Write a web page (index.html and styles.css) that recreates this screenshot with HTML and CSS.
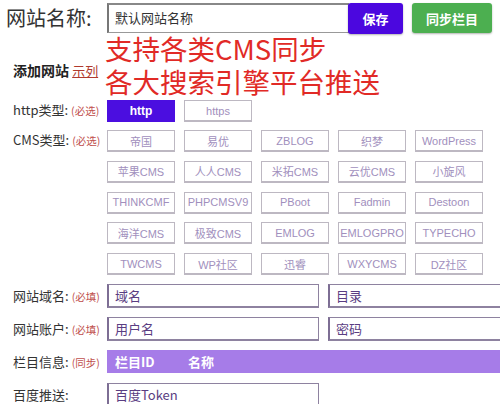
FILE: index.html
```html
<!DOCTYPE html>
<html lang="zh">
<head>
<meta charset="utf-8">
<link rel="stylesheet" href="styles.css">
</head>
<body>
<div class="page">
  <div class="top">
    <div class="site-label">网站名称:</div>
    <div class="site-input">默认网站名称</div>
    <div class="btn-save">保存</div>
    <div class="btn-sync">同步栏目</div>
  </div>
  <div class="promo-row">
    <div class="add-title"><b>添加网站</b> <span class="example">示列</span></div>
    <div class="promo">
      <div class="promo-line">支持各类CMS同步</div>
      <div class="promo-line">各大搜索引擎平台推送</div>
    </div>
  </div>
  <div class="row http-row">
    <div class="label">http类型:<span class="req">(必选)</span></div>
    <div class="opts">
      <div class="opt active">http</div>
      <div class="opt">https</div>
    </div>
  </div>
  <div class="row cms-row">
    <div class="label">CMS类型:<span class="req">(必选)</span></div>
    <div class="grid">
      <div class="opt">帝国</div><div class="opt">易优</div><div class="opt">ZBLOG</div><div class="opt">织梦</div><div class="opt">WordPress</div>
      <div class="opt">苹果CMS</div><div class="opt">人人CMS</div><div class="opt">米拓CMS</div><div class="opt">云优CMS</div><div class="opt">小旋风</div>
      <div class="opt">THINKCMF</div><div class="opt">PHPCMSV9</div><div class="opt">PBoot</div><div class="opt">Fadmin</div><div class="opt">Destoon</div>
      <div class="opt">海洋CMS</div><div class="opt">极致CMS</div><div class="opt">EMLOG</div><div class="opt">EMLOGPRO</div><div class="opt">TYPECHO</div>
      <div class="opt">TWCMS</div><div class="opt">WP社区</div><div class="opt">迅睿</div><div class="opt">WXYCMS</div><div class="opt">DZ社区</div>
    </div>
  </div>
  <div class="row field-row first-field">
    <div class="label">网站域名:<span class="req">(必填)</span></div>
    <div class="fields">
      <div class="field">域名</div>
      <div class="field open">目录</div>
    </div>
  </div>
  <div class="row field-row">
    <div class="label">网站账户:<span class="req">(必填)</span></div>
    <div class="fields">
      <div class="field">用户名</div>
      <div class="field open">密码</div>
    </div>
  </div>
  <div class="row field-row">
    <div class="label">栏目信息:<span class="req">(同步)</span></div>
    <div class="bar"><span class="bar-id">栏目ID</span><span>名称</span></div>
  </div>
  <div class="row field-row">
    <div class="label">百度推送:</div>
    <div class="fields">
      <div class="field">百度Token</div>
    </div>
  </div>
</div>
</body>
</html>
```
FILE: styles.css
```css
html, body {
  margin: 0;
  padding: 0;
  overflow: hidden;
  background: #ffffff;
}
body {
  width: 500px;
  height: 404px;
  font-family: "Liberation Sans", "Noto Sans CJK SC", sans-serif;
  color: #333333;
}
.page {
  display: flex;
  flex-direction: column;
}
.top {
  display: flex;
  align-items: center;
  height: 35px;
  padding-top: 1px;
  box-sizing: border-box;
}
.site-label {
  width: 107px;
  padding-left: 6px;
  box-sizing: border-box;
  font-size: 20px;
  font-family: "Noto Sans CJK SC", sans-serif;
  color: #333;
  margin-top: -2px;
}
.site-input {
  width: 242px;
  height: 30px;
  box-sizing: border-box;
  border: 1px solid #999;
  border-left: 2px solid #777;
  border-top: 2px solid #888;
  font-family: "Noto Sans CJK SC", sans-serif;
  font-size: 13px;
  line-height: 26px;
  padding-left: 6px;
  color: #333;
}
.btn-save {
  width: 55px;
  height: 31px;
  margin-left: -1px;
  background: #4b07df;
  border-radius: 3px;
  color: #fff;
  font-family: "Noto Sans CJK SC", sans-serif;
  font-size: 13px;
  font-weight: bold;
  display: flex;
  align-items: center;
  justify-content: center;
  box-shadow: 0 1px 2px rgba(0,0,0,0.3);
}
.btn-sync {
  width: 80px;
  height: 30px;
  margin-left: 9px;
  background: #4caf50;
  border-radius: 3px;
  color: #fff;
  font-family: "Noto Sans CJK SC", sans-serif;
  font-size: 13px;
  font-weight: bold;
  display: flex;
  align-items: center;
  justify-content: center;
  box-shadow: 0 1px 2px rgba(0,0,0,0.3);
}
.promo-row {
  display: flex;
  height: 64px;
}
.add-title {
  width: 105px;
  padding-left: 13px;
  box-sizing: border-box;
  padding-top: 25px;
  font-family: "Noto Sans CJK SC", sans-serif;
  font-size: 14px;
  color: #222;
}
.example {
  color: #b03a2e;
  font-size: 13px;
  text-decoration: underline;
}
.promo {
  color: #e12a26;
  font-family: "Noto Sans CJK SC", sans-serif;
  font-size: 27.5px;
  margin-top: -3px;
}
.promo-line {
  height: 33px;
  line-height: 33px;
  white-space: nowrap;
}
.row {
  display: flex;
}
.label {
  width: 107px;
  padding-left: 13px;
  box-sizing: border-box;
  font-size: 13px;
  font-family: "Noto Sans CJK SC", sans-serif;
  color: #333;
  white-space: nowrap;
}
.req {
  color: #c0504d;
  font-size: 10.5px;
  margin-left: 3px;
}
.http-row {
  height: 30px;
  margin-top: 1px;
}
.http-row .label, .cms-row .label {
  line-height: 22px;
  margin-top: -1px;
}
.opts {
  display: flex;
  gap: 9px;
}
.opt {
  width: 68px;
  height: 22px;
  box-sizing: border-box;
  border: 1px solid #bdb8c2;
  border-width: 1px 1px 2px 1px;
  color: #a18fbd;
  font-size: 11px;
  font-family: "Liberation Sans", "Noto Sans CJK SC", sans-serif;
  display: flex;
  align-items: center;
  justify-content: center;
  white-space: nowrap;
}
.opt.active {
  background: #4b0ee0;
  border-color: #4b0ee0;
  color: #fff;
  font-weight: bold;
  font-size: 12px;
}
.grid {
  display: grid;
  grid-template-columns: repeat(5, 68px);
  column-gap: 9px;
  row-gap: 8.75px;
}
.field-row {
  height: 33px;
}
.first-field {
  margin-top: 9px;
}
.field-row .label {
  line-height: 24px;
}
.fields {
  display: grid;
  grid-template-columns: 212px 172px;
  column-gap: 9px;
}
.field {
  height: 24px;
  box-sizing: border-box;
  border: 1px solid #8e82a0;
  border-left: 2px solid #7d6e94;
  border-bottom: 2px solid #8e82a0;
  color: #5a3d82;
  font-size: 13px;
  font-family: "Noto Sans CJK SC", sans-serif;
  padding-left: 6px;
  line-height: 21px;
}
.field.open {
  border-right: none;
}
.bar {
  width: 393px;
  height: 23px;
  background: #a67ce8;
  color: #fff;
  font-weight: bold;
  font-size: 13px;
  font-family: "Noto Sans CJK SC", sans-serif;
  display: flex;
  align-items: center;
  padding-left: 8px;
  box-sizing: border-box;
}
.bar-id {
  width: 73px;
}
```
